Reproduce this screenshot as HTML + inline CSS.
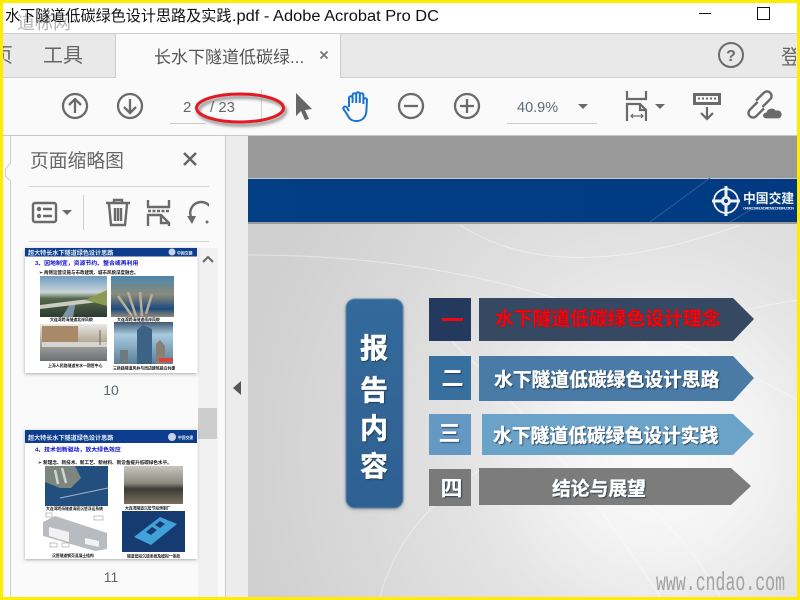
<!DOCTYPE html>
<html><head><meta charset="utf-8">
<style>
html,body{margin:0;padding:0;width:800px;height:600px;overflow:hidden;background:#fff}
svg{display:block;position:absolute;left:0;top:0}
text{font-family:"Liberation Sans","Noto Sans CJK SC",sans-serif}
</style></head><body>
<svg width="800" height="600" viewBox="0 0 800 600" xmlns="http://www.w3.org/2000/svg">
<defs>
<radialGradient id="bg" gradientUnits="userSpaceOnUse" cx="660" cy="450" r="420"><stop offset="0" stop-color="#fbfbfb"/><stop offset=".22" stop-color="#f4f4f4"/><stop offset=".45" stop-color="#e4e4e4"/><stop offset=".75" stop-color="#d8d8d8"/><stop offset="1" stop-color="#d0d0d0"/></radialGradient>
<linearGradient id="box" x1="0" y1="0" x2="0" y2="1"><stop offset="0" stop-color="#336a9b"/><stop offset="1" stop-color="#2e6092"/></linearGradient>
<linearGradient id="hd" x1="0" y1="0" x2="1" y2="0"><stop offset="0" stop-color="#023f85"/><stop offset="1" stop-color="#013a80"/></linearGradient>
<linearGradient id="sky" x1="0" y1="0" x2="0" y2="1"><stop offset="0" stop-color="#6d9cc4"/><stop offset=".4" stop-color="#c9d4d6"/><stop offset=".55" stop-color="#55684a"/><stop offset="1" stop-color="#2c3a30"/></linearGradient>
<linearGradient id="sea" x1="0" y1="0" x2="0" y2="1"><stop offset="0" stop-color="#4b86ad"/><stop offset=".45" stop-color="#8a8b7a"/><stop offset=".8" stop-color="#1e4a80"/><stop offset="1" stop-color="#8d8a75"/></linearGradient>
<linearGradient id="twr" x1="0" y1="0" x2="0" y2="1"><stop offset="0" stop-color="#3f5a70"/><stop offset=".3" stop-color="#a9cbe0"/><stop offset="1" stop-color="#5a7f98"/></linearGradient>
<linearGradient id="st" x1="0" y1="0" x2="0" y2="1"><stop offset="0" stop-color="#e8e8e6"/><stop offset=".5" stop-color="#b3a590"/><stop offset=".7" stop-color="#8f9292"/><stop offset="1" stop-color="#6c6f72"/></linearGradient>
<linearGradient id="dock" x1="0" y1="0" x2="0" y2="1"><stop offset="0" stop-color="#c7c5bd"/><stop offset=".45" stop-color="#8d8b80"/><stop offset=".6" stop-color="#3b3a34"/><stop offset="1" stop-color="#77705d"/></linearGradient>
<filter id="sh" x="-20%" y="-40%" width="140%" height="180%"><feDropShadow dx="2" dy="3" stdDeviation="1.500" flood-color="#555" flood-opacity=".7"/></filter>
<filter id="sh2" x="-20%" y="-10%" width="140%" height="120%"><feDropShadow dx="0" dy="1" stdDeviation="1.500" flood-color="#555" flood-opacity=".5"/></filter>
<filter id="ts" x="-20%" y="-20%" width="140%" height="140%"><feDropShadow dx="1" dy="1" stdDeviation=".6" flood-color="#1a2f45" flood-opacity=".8"/></filter>
<filter id="b1"><feGaussianBlur stdDeviation=".3"/></filter>
<clipPath id="cl1"><rect x="3" y="34" width="112" height="43"/></clipPath>
<clipPath id="cl2"><rect x="700" y="34" width="96" height="43"/></clipPath>
<clipPath id="cl3"><rect x="180" y="190" width="29" height="45"/></clipPath>
</defs>

<!-- chrome -->
<rect width="800" height="600" fill="#fff"/>
<rect x="0" y="33" width="800" height="1" fill="#cfcfcf"/>
<rect x="0" y="34" width="800" height="43" fill="#e9e9e9"/>
<rect x="0" y="77" width="800" height="1" fill="#cfcfcf"/>
<rect x="0" y="78" width="800" height="57" fill="#fafafa"/>
<rect x="0" y="135" width="800" height="1" fill="#c9c9c9"/>
<rect x="115" y="34" width="225" height="44" fill="#fafafa"/>
<rect x="115" y="34" width="1" height="44" fill="#cfcfcf"/>
<rect x="340" y="34" width="1" height="44" fill="#cfcfcf"/>

<!-- title -->
<text x="17" y="29" font-size="18" fill="#b4b4b4" textLength="54">道标网</text>
<text x="5" y="21" font-size="15.100" fill="#111">水下隧道低碳绿色设计思路及实践</text>
<text x="232" y="21" font-size="15.500" fill="#111" textLength="207" lengthAdjust="spacingAndGlyphs">.pdf - Adobe Acrobat Pro DC</text>
<rect x="699" y="13" width="12" height="1" fill="#111"/>
<rect x="757.500" y="7.500" width="12" height="12" fill="none" stroke="#111"/>

<!-- tabs -->
<g clip-path="url(#cl1)"><text x="-7" y="62" font-size="20" fill="#666">页</text></g>
<text x="43" y="62" font-size="20" fill="#666">工具</text>
<text x="154" y="63" font-size="17" fill="#555">长水下隧道低碳绿...</text>
<path d="M320.500 51.500l7 7M327.500 51.500l-7 7" stroke="#777" stroke-width="1.800" fill="none"/>
<circle cx="731" cy="55" r="12" fill="none" stroke="#6a6a6a" stroke-width="2"/>
<text x="731" y="61" font-size="16" font-weight="bold" fill="#6a6a6a" text-anchor="middle">?</text>
<g clip-path="url(#cl2)"><text x="781" y="64" font-size="20" fill="#666">登</text></g>

<!-- toolbar -->
<g fill="none" stroke="#6a6a6a" stroke-width="2.300">
<circle cx="75" cy="106" r="12"/><path d="M75 113V99M69 105l6-6 6 6"/>
<circle cx="130" cy="106" r="12"/><path d="M130 99v14M124 107l6 6 6-6"/>
<circle cx="411" cy="106" r="12"/><path d="M404 106h14"/>
<circle cx="467" cy="106" r="12"/><path d="M460 106h14M467 99v14"/>
</g>
<text x="183" y="112" font-size="15" fill="#666">2</text>
<text x="210" y="112" font-size="15" fill="#666">/ 23</text>
<rect x="170" y="123" width="36" height="1" fill="#ccc"/>
<rect x="261" y="89" width="1" height="34" fill="#d4d4d4"/>
<ellipse cx="240" cy="108" rx="43.500" ry="14" fill="none" stroke="#e01a24" stroke-width="3" filter="url(#sh)"/>
<path d="M296 93l16 16-7 1 4 9-4 1-4-9-5 5z" fill="#666"/>
<path d="M349 107v-9a1.800 1.800 0 0 1 3.600 0v5M352.600 103V95a1.800 1.800 0 0 1 3.600 0v8M356.200 103V94a1.800 1.800 0 0 1 3.600 0v9M359.800 103v-8a1.800 1.800 0 0 1 3.600 0v9M363.400 100a1.800 1.800 0 0 1 3.600 0l-.5 9c0 8-4 12-10 12-5 0-7-2-9-6l-4-6c-1-2 2-3.500 3.500-1.500L349 111" fill="none" stroke="#1a73d0" stroke-width="2"/>
<text x="517" y="112" font-size="14.500" fill="#5f6b78">40.9%</text>
<path d="M578 104h10l-5 5z" fill="#6a6a6a"/>
<rect x="507" y="123" width="90" height="1" fill="#ccc"/>
<g fill="none" stroke="#6a6a6a" stroke-width="2.200">
<path d="M627 91v8h19v-8"/>
<path d="M627 121v-17h13l6 6v11"/>
<path d="M640 104v6h6"/>
<path stroke-width="1.200" d="M631 116h12M633 114l-2 2 2 2M641 114l2 2-2 2"/>
<path d="M707 107v11M701 113l6 6 6-6"/>
<path stroke-width="2.400" d="M764 108.400L756.200 116.200A4.500 4.500 0 0 1 749.800 109.800L757.600 102"/>
<path stroke-width="2.400" d="M762.400 107L770.200 99.200A4.500 4.500 0 0 0 763.800 92.800L756 100.600"/>
</g>
<path d="M655 104h10l-5 5z" fill="#6a6a6a"/>
<rect x="693" y="93" width="28" height="12" fill="#6a6a6a"/>
<rect x="696" y="96" width="22" height="6" fill="#fafafa"/>
<rect x="698" y="97.500" width="2" height="2" fill="#6a6a6a"/><rect x="702" y="97.500" width="2" height="2" fill="#6a6a6a"/><rect x="706" y="97.500" width="2" height="2" fill="#6a6a6a"/><rect x="710" y="97.500" width="2" height="2" fill="#6a6a6a"/><rect x="714" y="97.500" width="2" height="2" fill="#6a6a6a"/>
<path d="M766 119a3.500 3.500 0 0 1 0-7 6 6 0 0 1 10-2 4.500 4.500 0 0 1 3 9z" fill="#6a6a6a" stroke="#fafafa" stroke-width="1.200"/>

<!-- side panel -->
<rect x="3" y="136" width="222" height="461" fill="#fafafa"/>
<rect x="10" y="136" width="1" height="461" fill="#d0d0d0"/>
<rect x="10" y="164" width="1.500" height="17" fill="#fafafa"/>
<path d="M10.500 163l-5 6v7l5 5" fill="#fafafa" stroke="#d0d0d0"/>
<rect x="225" y="136" width="1" height="461" fill="#c9c9c9"/>
<rect x="226" y="136" width="22" height="461" fill="#ececec"/>
<path d="M233 388l8-7v14z" fill="#555"/>
<text x="30" y="167" font-size="18.800" fill="#666">页面缩略图</text>
<path d="M184 153l12 12M196 153l-12 12" stroke="#666" stroke-width="2.600" fill="none"/>
<rect x="29" y="186" width="180" height="1" fill="#d4d4d4"/>
<rect x="29" y="241" width="180" height="1" fill="#d4d4d4"/>
<rect x="83" y="195" width="1" height="35" fill="#d0d0d0"/>
<g fill="none" stroke="#6a6a6a" stroke-width="2.400">
<rect x="33" y="203" width="23" height="19" rx="2"/>
<path d="M43 209h9M43 216h9"/>
<path d="M106 203h24M114 203v-3h8v3M109 204l2 21h14l2-21M115 208v13M118 208v13M121 208v13"/>
<path d="M148 200v7h21v-7M148 226v-11h13l8 8v3"/>
<path d="M148 211h21" stroke-dasharray="3 1.500"/>
<path d="M161 215v8h8"/>
<g clip-path="url(#cl3)"><path d="M191 217a11 11 0 0 1 10-15 11 11 0 0 1 10 6"/></g>
</g>
<circle cx="39" cy="209" r="2.200" fill="#6a6a6a"/><circle cx="39" cy="216" r="2.200" fill="#6a6a6a"/>
<path d="M62 210h10l-5 5z" fill="#6a6a6a"/>
<path d="M187 216h9l-4 8z" fill="#6a6a6a"/>
<circle cx="207" cy="222" r="1.500" fill="#6a6a6a"/>

<!-- scrollbar -->
<rect x="198" y="248" width="20" height="349" fill="#f1f1f1"/>
<rect x="198" y="408" width="19" height="31" fill="#cdcdcd"/>
<path d="M203 262l5-5 5 5" fill="none" stroke="#666" stroke-width="2"/>

<!-- thumb 1 -->
<rect x="25" y="248" width="172" height="125" fill="#fff" filter="url(#sh2)"/>
<rect x="197" y="246" width="1" height="130" fill="#f1f1f1"/>
<g filter="url(#b1)">
<rect x="25" y="248" width="172" height="8.500" fill="#073c8c"/>
<text x="28" y="255" font-size="6.100" font-weight="bold" fill="#e8edf5">超大特长水下隧道绿色设计思路</text>
<text x="177" y="254.500" font-size="3.900" font-weight="bold" fill="#e8edf5">中国交建</text>
<circle cx="172" cy="252" r="3.500" fill="#c8d4e6"/>
<text x="35" y="265" font-size="5.900" font-weight="bold" fill="#1010d0">3、因地制宜，资源节约、整合或再利用</text>
<text x="39" y="274" font-size="4.500" font-weight="bold" fill="#111">➢ 两侧运营设施与市政建筑、城市风貌深度融合。</text>
<rect x="40" y="276" width="67" height="41" fill="url(#sky)"/>
<path d="M62 317l10-16 4 0-3 16z" fill="#7d93a8"/>
<path d="M40 305l40-5 27-2v3l-67 8z" fill="#c8ccc2"/>
<path d="M85 300l22-10v16z" fill="#8b9a55"/>
<rect x="111" y="276" width="63" height="41" fill="url(#sea)"/>
<path d="M118 296l14 20M128 292l8 24M140 292l2 24M152 294l-6 20" stroke="#b7ae95" stroke-width="2.500" fill="none"/>
<text x="50" y="321" font-size="3.900" font-weight="bold" fill="#111">大连湾跨海隧道北岸风貌</text>
<text x="117" y="321" font-size="3.900" font-weight="bold" fill="#111">大连湾跨海隧道南岸风貌</text>
<rect x="40" y="324" width="67" height="37" fill="url(#st)"/>
<path d="M42 326h36v16H42z" fill="#a98a68"/>
<path d="M42 342h65v5H42z" fill="#d4d4d0"/>
<path d="M100 330v15" stroke="#666"/>
<rect x="114" y="322" width="59" height="42" fill="url(#twr)"/>
<path d="M137 364v-34l6-5 9 4v35z" fill="#3d6484"/>
<path d="M156 364v-20l4-4 5 6v18z" fill="#8a7f74"/>
<path d="M120 364v-14h8v14z" fill="#6d7a80"/>
<rect x="159" y="358" width="14" height="4" fill="#d8443c"/>
<text x="48" y="367" font-size="3.900" font-weight="bold" fill="#111">上海人民路隧道东水一期管中心</text>
<text x="113" y="369.500" font-size="3.900" font-weight="bold" fill="#111">三新路隧道风井与周边建筑融合共建</text>
</g>
<text x="111" y="395" font-size="14" fill="#5b6672" text-anchor="middle">10</text>

<!-- thumb 2 -->
<rect x="25" y="430" width="172" height="129" fill="#fff" filter="url(#sh2)"/>
<rect x="197" y="428" width="1" height="134" fill="#f1f1f1"/>
<g filter="url(#b1)">
<rect x="25" y="430" width="172" height="13" fill="#073c8c"/>
<text x="28" y="440" font-size="6.100" font-weight="bold" fill="#e8edf5">超大特长水下隧道绿色设计思路</text>
<text x="178" y="439" font-size="3.800" font-weight="bold" fill="#e8edf5">中国交建</text>
<circle cx="172" cy="437" r="4" fill="#c8d4e6"/>
<text x="35" y="451.500" font-size="5.900" font-weight="bold" fill="#1010d0">4、技术创新驱动，放大绿色效应</text>
<text x="38" y="464" font-size="4.600" font-weight="bold" fill="#111">➢ 新理念、新技术、新工艺、新材料、新设备提升低碳绿色水平。</text>
<rect x="45" y="466" width="63" height="40" fill="#21507e"/>
<path d="M45 466h30l6 12-10 10H60l-15-6z" fill="#7c8580"/>
<path d="M55 470l3 14M62 468l4 15" stroke="#cfd4d2" stroke-width="2.500"/>
<path d="M60 498l48-10" stroke="#a0b4c4" stroke-width="1"/>
<rect x="124" y="466" width="59" height="38" fill="url(#dock)"/>
<text x="46" y="510" font-size="3.800" font-weight="bold" fill="#111">大连湾跨海隧道海底沉管浮运系统</text>
<text x="125" y="509.500" font-size="3.800" font-weight="bold" fill="#111">大连湾隧道沉管节段预制厂</text>
<path d="M43 522l12-6 52 17v16l-12 2-52-15z" fill="#b8bcc0"/>
<path d="M49 527l20 5v10l-20-6zM85 538l14 3v6l-14-3z" fill="#f2f2f2"/>
<rect x="46" y="513" width="6" height="4" fill="#fff" stroke="#888" stroke-width=".5"/>
<rect x="94" y="516" width="9" height="4" fill="#fff" stroke="#888" stroke-width=".5"/>
<rect x="50" y="543" width="7" height="4" fill="#fff" stroke="#888" stroke-width=".5"/>
<rect x="62" y="543" width="7" height="4" fill="#fff" stroke="#888" stroke-width=".5"/>
<rect x="122" y="511" width="63" height="41" fill="#123a6f"/>
<path d="M134 537l26-20 17 7-26 21z" fill="#43a1d8"/>
<path d="M146 532l6-5 5 3-6 5zM155 525l5-4 5 3-5 4z" fill="#123a6f"/>
<text x="52" y="557" font-size="3.800" font-weight="bold" fill="#111">沉管隧道钢壳混凝土结构</text>
<text x="127" y="557.500" font-size="3.800" font-weight="bold" fill="#111">隧道管段沉放系统及模拟一体船</text>
</g>
<text x="111" y="582" font-size="14" fill="#5b6672" text-anchor="middle">11</text>

<!-- document -->
<rect x="248" y="136" width="549" height="42" fill="#999"/>
<rect x="248" y="178" width="549" height="1" fill="#c8c8c8"/>
<rect x="248" y="179" width="549" height="43" fill="url(#hd)"/>
<path d="M650 222l60-44" stroke="#2f609b" stroke-width="1" fill="none"/>
<path d="M730 222l22-13" stroke="#2f609b" stroke-width="1" fill="none"/>
<rect x="248" y="222" width="549" height="2" fill="#9a9a9a"/>
<rect x="248" y="224" width="549" height="373" fill="url(#bg)"/>
<g fill="none" stroke="#fff" stroke-width="1" opacity=".45">
<path d="M248 255Q420 255 560 300T797 400M460 225Q560 290 740 225M440 330Q560 440 660 597M640 500Q690 540 720 597M480 470Q400 520 380 597M797 300Q680 320 640 345"/>
</g>
<g fill="#eef2f7">
<circle cx="726" cy="201" r="12" fill="none" stroke="#eef2f7" stroke-width="1.800"/>
<path d="M724.500 186h3v30h-3zM712 199.500h28v3h-28z"/>
<circle cx="726" cy="201" r="5"/><circle cx="726" cy="201" r="2" fill="#013a80"/>
</g>
<text x="743" y="203" font-size="12.800" font-weight="bold" fill="#f0f4f8">中国交建</text>
<text x="743" y="209.500" font-size="3.800" fill="#d8e0ea" textLength="51" font-weight="bold">CHINA COMMUNICATIONS CONSTRUCTION</text>

<!-- slide content -->
<rect x="346" y="299" width="57" height="209" rx="9" fill="url(#box)" stroke="#5e86ab" stroke-width="1" filter="url(#sh2)"/>
<g font-size="28" font-weight="bold" fill="#fff" stroke="#fff" stroke-width=".4" text-anchor="middle" filter="url(#ts)">
<text x="374" y="358">报</text><text x="374" y="400">告</text><text x="374" y="438">内</text><text x="374" y="476">容</text>
</g>

<rect x="429" y="298" width="42" height="43" fill="#23395d"/>
<path d="M479 298h254l21 21-21 22H479z" fill="#364963"/>
<rect x="429" y="356" width="42" height="44" fill="#37709f"/>
<path d="M479 356h254l21 22-21 23H479z" fill="#4a7aa6"/>
<rect x="429" y="414" width="42" height="41" fill="#6598c3"/>
<path d="M482 414h251l21 20-21 21H482z" fill="#6ba2c8"/>
<rect x="429" y="469" width="42" height="37" fill="#7a7a7a"/>
<path d="M479 468h252l20 18-20 19H479z" fill="#7c7c7c"/>

<g font-size="18.800" font-weight="bold">
<text x="495" y="325" fill="#f4060f" stroke="#c00" stroke-width=".4">水下隧道低碳绿色设计理念</text>
<text x="494" y="386" fill="#fff" stroke="#fff" stroke-width=".3" filter="url(#ts)">水下隧道低碳绿色设计思路</text>
<text x="493" y="442" fill="#fff" stroke="#fff" stroke-width=".3" filter="url(#ts)">水下隧道低碳绿色设计实践</text>
<text x="552" y="495" fill="#fff" stroke="#fff" stroke-width=".3" filter="url(#ts)">结论与展望</text>
</g>
<rect x="442" y="318" width="21" height="3" fill="#f4060f"/>
<g font-size="22" font-weight="bold" fill="#fff" text-anchor="middle" filter="url(#ts)">
<text x="452.500" y="386">二</text><text x="449.500" y="441">三</text><text x="451.500" y="496">四</text>
</g>

<text x="656" y="590" font-size="26" fill="#a2a2a2" textLength="129" lengthAdjust="spacingAndGlyphs" style="font-family:'Liberation Mono',monospace">www.cndao.com</text>

<!-- yellow frame -->
<rect x="0" y="0" width="800" height="3" fill="#ffec00"/>
<rect x="0" y="597" width="800" height="3" fill="#ffec00"/>
<rect x="0" y="0" width="3" height="600" fill="#ffec00"/>
<rect x="797" y="0" width="3" height="600" fill="#ffec00"/>
</svg>
</body></html>
